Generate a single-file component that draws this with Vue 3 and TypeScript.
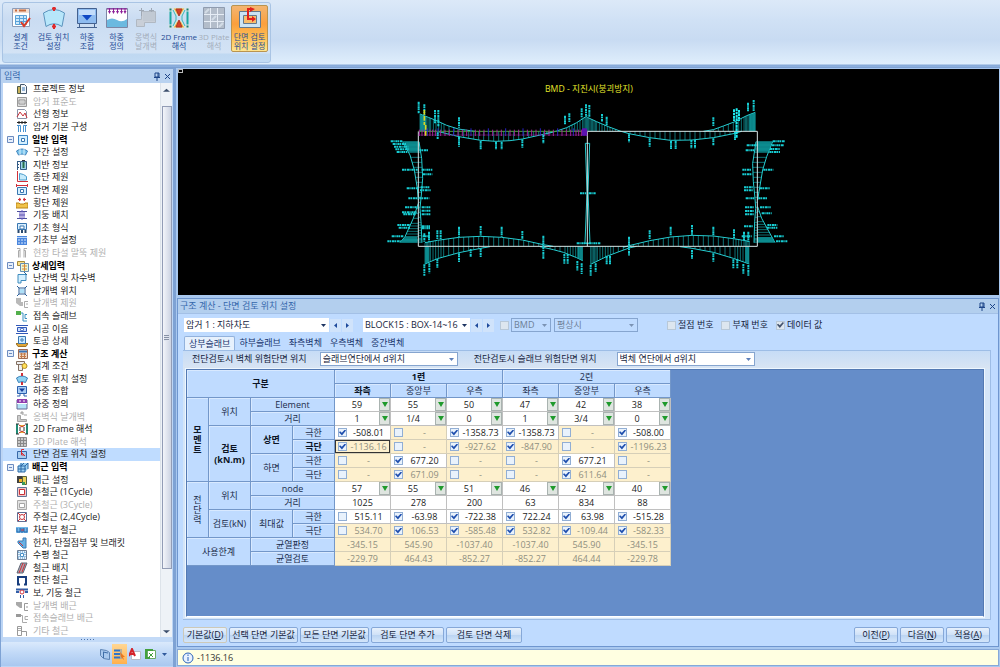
<script setup lang="ts">
import { ref } from 'vue'

interface TreeRow { label: string; icon: string; off?: boolean; group?: boolean; current?: boolean }
interface Tool { lines: string[]; icon: string; off?: boolean; active?: boolean }
interface Head { text: string; rows?: number; cols?: number; bold?: boolean; kind?: string }
interface Row { heads: Head[]; type: 'select' | 'plain' | 'check'; soft?: boolean; cells: string[]; on?: number[] }

const box = (c: string, f: string, extra = '') =>
  `<path d="M1.5 1.5h9v9h-9z" fill="${f}" stroke="${c}"/>${extra}`

const art: Record<string, string> = {
  project: '<path d="M4.500 1.500h4l2 2v7h-6z" fill="#f4f7fb" stroke="#46586e"/><path d="M1.500 3.500h3v7h-3z" fill="#c9b25a" stroke="#4d5a4a"/><path d="M6 5h3M6 7h3" stroke="#3a78b8"/>',
  standard: box('#9a9a9a', '#dedede', '<path d="M3 4h6v4H3z" fill="#f5f5f5" stroke="#8d8d8d"/><path d="M4 6h4" stroke="#aaa"/>'),
  alignment: '<path d="M1.500 1.500h7l2 2v7h-9z" fill="#fff" stroke="#8a93a8"/><path d="M1 9l3-5 3 4 2-3 2 5" fill="none" stroke="#c8323a"/>',
  basic: '<path d="M1 1.500h10" stroke="#222"/><path d="M3 0v3M9 0v3M6 0v3" stroke="#222"/><path d="M1 4.500h3.500V11M11 4.500H7.500V11M2.500 5v6M9.500 5v6" fill="none" stroke="#4a93cf"/>',
  general: box('#3d86c6', '#d5f0ff', '<path d="M4.500 4.500h3v3h-3z" fill="#fff" stroke="#3876b0"/>'),
  section: '<path d="M.500 5q5.500-4 11 0l-2 4q-3.500-2-7 0z" fill="#7fc6ec" stroke="#3f83bc"/><path d="M4 3v6M8 3v6" stroke="#d8f0fc"/>',
  ground: '<path d="M1.500 2v9M1 2.500h3M1 5.500h2M1 8.500h2" stroke="#335c86"/><path d="M4.500 2.500h6v8h-6z" fill="#9fd3e8" stroke="#335c86"/><path d="M7.500 3v6" stroke="#28704a" stroke-width="2"/><path d="M6 1.500h3" stroke="#333"/>',
  profile: '<path d="M1.500 0v10.500H12" stroke="#d0303a" fill="none"/><path d="M3.500 2.500l4 1 3 2v3.500h-7z" fill="#c7ebfb" stroke="#4b9ccb"/>',
  cross: '<path d="M0 1.500h12M.500 0v3M11.500 0v3" stroke="#d0303a"/><path d="M1.500 3.500h9v7h-9z" fill="#d5f0ff" stroke="#3876b0"/><path d="M4.500 5.500h3v3h-3z" fill="#fff" stroke="#3876b0"/>',
  transverse: '<path d="M0 6h3l1 1h4l1-1h3v5H0z" fill="#f1c34a" stroke="#b98518"/><path d="M2 2.500h3M7 2.500h3M3 1l2 1.500L3 4M9 1L7 2.500 9 4" stroke="#d0303a" fill="none"/>',
  pillar: '<path d="M1 2.500h10M1 9.500h10M3 6h6" stroke="#4d4f9e"/><path d="M6 1v10M4 3v6M8 3v6" stroke="#6a5bc4"/>',
  found: '<path d="M1.500 1.500h9v6h-9z" fill="#d8efff" stroke="#3876b0"/><path d="M4 4h4v3H4z" fill="#fff" stroke="#3876b0"/><path d="M2.500 8v3M6 8v3M9.500 8v3" stroke="#27476d" stroke-width="2"/>',
  base: '<path d="M1 2h10v9H1z" fill="#4b86dd"/><path d="M1 3.500h10" stroke="#b8d6fa"/><path d="M2 6h2M5 6h2M8 6h2M2 9h2M5 9h2M8 9h2" stroke="#d9e9ff"/>',
  pile: '<path d="M1 1.500h3v9M11 1.500H8v9M4 3.500h-1.500v7M8 3.500h1.500v7" stroke="#aaa" fill="none"/>',
  detail: '<path d="M.500 1.500h7v4h-7z" fill="#fbe08a" stroke="#a58b3b"/><path d="M3.500 3.500h8v8h-8z" fill="#eaf6d7" stroke="#668fb4"/><path d="M5 6h5M5 9h5M7.500 4v7" stroke="#d88a32"/>',
  rail: '<path d="M2 2.500h8v6H5v2.500H2z" fill="#d5f0ff" stroke="#3f8bbd"/><path d="M8 0l3 3" stroke="#226699"/>',
  wing: '<path d="M1 1l2 2v6l-2 2M11 1L9 3v6l2 2M3 3h6M3 9h6" fill="none" stroke="#2c5f98"/><path d="M4 4h4v4H4z" fill="#aee0f8"/>',
  wingdim: '<path d="M0 1h5v4h2v4H4L0 6z" fill="#b9b9b9"/><path d="M12 4.500H8.500v6H12M10 7h2" fill="none" stroke="#aaa"/>',
  slab: '<path d="M0 1h5v4H0z" fill="#53b04c"/><path d="M5 3h2v8h4M11 4.500H9v4h2" fill="none" stroke="#3d91c2"/>',
  joint: '<path d="M0 2.500h12M0 10.500h12" stroke="#3158b8"/><path d="M1.500 4.500h9v4h-9z" fill="#cde1ff" stroke="#3158b8"/><circle cx="6" cy="6.500" r="1.500" fill="#fff" stroke="#3158b8"/>',
  earth: '<path d="M0 8.500h12l-2 3H2z" fill="#e1a637" stroke="#9f7325"/><path d="M2.500 1.500h7v7h-7z" fill="#cbe9ff" stroke="#3876b0"/><path d="M5 4h2v2H5z" fill="#fff" stroke="#3876b0"/>',
  calc: box('#a06b52', '#f0d8c4', '<path d="M2 3.500h8" stroke="#3a73b8" stroke-width="2"/><path d="M3 6h6M3 8.500h6M4.500 5v5M7.500 5v5" stroke="#c47b4a"/>'),
  cond: '<path d="M.500 1.500h8v3h-8zM2.500 5v5.500h4V5" fill="#eee" stroke="#836f61"/><circle cx="8.500" cy="6" r="2.500" fill="#ffe05a" stroke="#b58c23"/>',
  fan: '<path d="M.500 5q5.500-4 11 0l-2 4.500q-3.500-2-7 0z" fill="#8fd2f2" stroke="#3a80b8"/><path d="M6 0v3M6 9v3" stroke="#d0303a" stroke-width="2"/>',
  combo: '<path d="M1.500 1.500h9v7h-9z" fill="#a9cdf5" stroke="#2c60ad"/><path d="M3 3.500h6L6 7z" fill="#173f9d"/><path d="M1 11h3V9M11 11H8V9" stroke="#2c60ad" fill="none"/>',
  define: '<path d="M1 2h10v9H1z" fill="#b4e2f6" stroke="#636b96"/><path d="M1 1h10v4H1z" fill="#8f3fae"/><path d="M1 5.500h10M4 2v2M8 2v2" stroke="#fff"/>',
  retain: '<path d="M1.500 10.500v-6h3v4h6v2zM5 3V1h2v3M8 4h3" fill="#ccc" stroke="#a2a2a2"/>',
  frame: '<path d="M1 1v10M11 1v10" stroke="#208a74" stroke-width="2"/><path d="M3 2l3 2 3-2M3 10l3-2 3 2" fill="#e8b33a" stroke="#c33124"/><path d="M0 1h3M9 1h3M0 11h3M9 11h3M4 4v4M8 4v4" stroke="#333"/>',
  plate: box('#8d8d8d', '#c9c9c9', '<path d="M1 4.500h10M1 7.500h10M4.500 1v10M7.500 1v10" stroke="#888"/>'),
  review: '<path d="M1.500 3.500h9v7h-9z" fill="#a8cdf0" stroke="#3868a8"/><path d="M8 1.500H5.500v5.500H8M6 5l3 3" fill="none" stroke="#d42a32"/>',
  rebar: '<path d="M1 5l3-3h7v6l-3 3H1z" fill="#9bd0f2"/><path d="M1 5h7v6M1 8h8M4 2v9M4 5l3-3M8 5l3-3M1 11h7M1 5v6M11 2v6" fill="none" stroke="#2d68a6"/>',
  rebarset: '<path d="M1 2h7v7H1z" fill="#404040"/><path d="M3 5h3v3H3z" fill="#f0b52d"/><path d="M6.500 2.500h4v8h-4z" fill="#ecd25a" stroke="#59623e"/><path d="M6 8h3v3H6z" fill="#3a9a5b"/>',
  cycle1: box('#627496', '#f6c7c7', '<path d="M3.500 3.500h5v5h-5z" fill="#fff" stroke="#c8323a"/>'),
  cycle3: box('#aaa', '#e3e3e3', '<path d="M3.500 4.500h5v4h-5z" fill="#fff" stroke="#a5a5a5"/>'),
  cycle24: box('#5f6f94', '#fff', '<circle cx="6" cy="6" r="2.500" fill="#fff" stroke="#c8323a"/><path d="M2 2l2 2M10 2L8 4M2 10l2-2M10 10L8 8" stroke="#c8323a"/>'),
  road: '<path d="M0 3h12v6H0z" fill="#73b9ea"/><path d="M1 4v4h3V4M5 4v4h2V4M8 4v4h3V4" fill="none" stroke="#2a66a8"/><path d="M5 6h3" stroke="#d0303a"/>',
  haunch: '<path d="M7 1h3v10H7L2 6V4h5z" fill="#68b1e4" stroke="#3a7ab4"/><path d="M3 5l4 4" stroke="#c8323a"/>',
  horiz: box('#6c7d94', '#e6f1fb', '<path d="M4.500 4.500h3v3h-3z" fill="#fff" stroke="#4a90c7"/><path d="M2 3h8M2 9h8M3 3v6M9 3v6" stroke="#4a90c7" stroke-dasharray="1 1"/>'),
  place: '<path d="M5 1h6L7 11H1z" fill="#a5a7b2" stroke="#5f6675"/><path d="M7 1L3 11M9 2L6 10" stroke="#d0303a"/>',
  shear: '<path d="M1 3h10M2 3v8M10 3v8M1 10.500h3M8 10.500h3" fill="none" stroke="#173d7d" stroke-width="2"/>',
  beam: '<path d="M0 2.500h12M0 5h3M9 5h3" stroke="#315ea8" stroke-width="2"/><circle cx="6" cy="5" r="2" fill="#fff" stroke="#d0303a"/><path d="M4.500 8v3M7.500 8v3" stroke="#315ea8"/>',
  wingbar: '<path d="M0 2h6v6H4L0 5z" fill="#a9a9a9"/><path d="M12 3.500H8.500v7H12M10 7h2" fill="none" stroke="#999"/>',
  slabbar: '<path d="M0 2h5v3H0z" fill="#999"/><path d="M5 3.500h1.500v7H11M12 4.500H9v3h3" fill="none" stroke="#aaa"/>',
  etc: '<path d="M1.500 1.500h4v9h-4zM6 6.500h4.500V11" fill="none" stroke="#999"/><path d="M2 3.500h3M2 5.500h3" stroke="#aaa"/>',
}

const big: Record<string, string> = {
  cond: '<path d="M2.500 1.500h17v18h-17z" fill="#fff" stroke="#8c9cb8"/><path d="M3 2h16v4H3z" fill="#f2ddd0"/><path d="M5 3.500h2M9 3.500h7" stroke="#c66b3e" stroke-width="2"/><path d="M5.500 8.500h11v9h-11z" fill="#cfe9fb"/><path d="M5.500 8.500h11v9h-11zM5 11.500h12M5 14.500h12M9.500 8v10M13.500 8v10" fill="none" stroke="#5aa2d8"/><path d="M11 15l3 4 6-8" fill="none" stroke="#d93a26" stroke-width="2"/>',
  fan: '<path d="M0.500 6Q11-1 21.500 6L19 19.500Q11 14 3 19.500Z" fill="#b7e6fa" stroke="#5b93bd"/><path d="M9 1.500h4M11 0v4M9 19.500h4M11 17v5" stroke="#e02a2a" stroke-width="2"/>',
  combo: '<path d="M1.500 1.500h19v15h-19z" fill="#8fbcf0" stroke="#44618f"/><path d="M3 3h16v5H3z" fill="#c3dcfa"/><path d="M6 8h10l-5 5.500z" fill="#0f47c4"/><path d="M3.500 17v3M18.500 17v3M1 20.500h20" fill="none" stroke="#44618f"/>',
  define: '<path d="M.500 1.500h21v19H.500z" fill="#fff" stroke="#7d86a5"/><path d="M1 2h20M3.500 1v4M7.500 1v4M11.500 1v4M15.500 1v4M19 1v4" stroke="#8d1f98"/><path d="M2 4h3L3.500 7zM6 4h3L7.500 7zM10 4h3l-1.500 3zM14 4h3l-1.500 3zM17.500 4h3L19 7z" fill="#8d1f98"/><path d="M1 13q5-3 10 0t10-1v8H1z" fill="#6bb9e0"/>',
  retain: '<path d="M6.500 4.500h14v11h-11v4h-8v-7h5z" fill="#c9cfd8" stroke="#b0b8c2"/><path d="M6.500 1v8M16.500 1v4M4 3.500h5M14 3.500h5" stroke="#9fa8b4"/><path d="M8 5h12v9H8z" fill="#c1c9d3"/>',
  frame: '<path d="M2.500 1v20M19.500 1v20" stroke="#1ba7a1" stroke-width="2"/><path d="M5 1h12l-4 7H9zM5 21h12l-4-7H9z" fill="#efb63b"/><path d="M8 2h6l-3 7zM8 20h6l-3-7z" fill="#d64127" stroke="#b0352a"/><path d="M1 1h3v3H1zM18 1h3v3h-3zM1 18h3v3H1zM18 18h3v3h-3z" fill="#1b7d72"/><path d="M5 3l3 6v4l-3 6M17 3l-3 6v4l3 6" fill="none" stroke="#38bcb7"/>',
  plate: '<path d="M.500.500h21v21H.500z" fill="#b3bdca" stroke="#8f9caf"/><path d="M1 7.500h20M1 14.500h20M7.500 1v20M14.500 1v20" stroke="#e6edf5"/><path d="M2 6l4-4M9 13l4-4M16 20l4-4" stroke="#d3dce6" stroke-width="2"/>',
  review: '<path d="M.500 4.500h21v16H.500z" fill="#cbe4f5" stroke="#62798e"/><path d="M4.500 8.500h13v8h-13z" fill="#f7bd6c" stroke="#62798e"/><path d="M13 2H9v10h5" fill="none" stroke="#e0201c" stroke-width="2"/><path d="M11 0l5 2-5 3zM13 9l4 3-4 3z" fill="#e0201c"/>',
}

const tools: Tool[] = [
  { lines: ['설계', '조건'], icon: 'cond' },
  { lines: ['검토 위치', '설정'], icon: 'fan' },
  { lines: ['하중', '조합'], icon: 'combo' },
  { lines: ['하중', '정의'], icon: 'define' },
  { lines: ['옹벽식', '날개벽'], icon: 'retain', off: true },
  { lines: ['2D Frame', '해석'], icon: 'frame' },
  { lines: ['3D Plate', '해석'], icon: 'plate', off: true },
  { lines: ['단면 검토', '위치 설정'], icon: 'review', active: true },
]

const tree: TreeRow[] = [
  { label: '프로젝트 정보', icon: 'project' },
  { label: '암거 표준도', icon: 'standard', off: true },
  { label: '선형 정보', icon: 'alignment' },
  { label: '암거 기본 구성', icon: 'basic' },
  { label: '일반 입력', icon: 'general', group: true },
  { label: '구간 설정', icon: 'section' },
  { label: '지반 정보', icon: 'ground' },
  { label: '종단 제원', icon: 'profile' },
  { label: '단면 제원', icon: 'cross' },
  { label: '횡단 제원', icon: 'transverse' },
  { label: '기둥 배치', icon: 'pillar' },
  { label: '기초 형식', icon: 'found' },
  { label: '기초부 설정', icon: 'base' },
  { label: '현장 타설 말뚝 제원', icon: 'pile', off: true },
  { label: '상세입력', icon: 'detail', group: true },
  { label: '난간벽 및 차수벽', icon: 'rail' },
  { label: '날개벽 위치', icon: 'wing' },
  { label: '날개벽 제원', icon: 'wingdim', off: true },
  { label: '접속 슬래브', icon: 'slab' },
  { label: '시공 이음', icon: 'joint' },
  { label: '토공 상세', icon: 'earth' },
  { label: '구조 계산', icon: 'calc', group: true },
  { label: '설계 조건', icon: 'cond' },
  { label: '검토 위치 설정', icon: 'fan' },
  { label: '하중 조합', icon: 'combo' },
  { label: '하중 정의', icon: 'define' },
  { label: '옹벽식 날개벽', icon: 'retain', off: true },
  { label: '2D Frame 해석', icon: 'frame' },
  { label: '3D Plate 해석', icon: 'plate', off: true },
  { label: '단면 검토 위치 설정', icon: 'review', current: true },
  { label: '배근 입력', icon: 'rebar', group: true },
  { label: '배근 설정', icon: 'rebarset' },
  { label: '주철근 (1Cycle)', icon: 'cycle1' },
  { label: '주철근 (3Cycle)', icon: 'cycle3', off: true },
  { label: '주철근 (2,4Cycle)', icon: 'cycle24' },
  { label: '차도부 철근', icon: 'road' },
  { label: '헌치, 단절점부 및 브래킷', icon: 'haunch' },
  { label: '수평 철근', icon: 'horiz' },
  { label: '철근 배치', icon: 'place' },
  { label: '전단 철근', icon: 'shear' },
  { label: '보, 기둥 철근', icon: 'beam' },
  { label: '날개벽 배근', icon: 'wingbar', off: true },
  { label: '접속슬래브 배근', icon: 'slabbar', off: true },
  { label: '기타 철근', icon: 'etc', off: true },
]

const tabs = ['상부슬래브', '하부슬래브', '좌측벽체', '우측벽체', '중간벽체']
const tab = ref(0)
const sides = ['좌측', '중앙부', '우측', '좌측', '중앙부', '우측']

const rows: Row[] = [
  { heads: [{ text: '모멘트', rows: 6, bold: true, kind: 'tall' }, { text: '위치', rows: 2 }, { text: 'Element', cols: 2 }], type: 'select', cells: ['59', '55', '50', '47', '42', '38'] },
  { heads: [{ text: '거리', cols: 2 }], type: 'select', cells: ['1', '1/4', '0', '1', '3/4', '0'] },
  { heads: [{ text: '검토 (kN.m)', rows: 4, bold: true }, { text: '상면', rows: 2, bold: true }, { text: '극한' }], type: 'check', cells: ['-508.01', '-', '-1358.73', '-1358.73', '-', '-508.00'], on: [0, 2, 3, 5] },
  { heads: [{ text: '극단', bold: true }], type: 'check', soft: true, cells: ['-1136.16', '-', '-927.62', '-847.90', '-', '-1196.23'], on: [0, 2, 3, 5] },
  { heads: [{ text: '하면', rows: 2 }, { text: '극한' }], type: 'check', cells: ['-', '677.20', '-', '-', '677.21', '-'], on: [1, 4] },
  { heads: [{ text: '극단' }], type: 'check', soft: true, cells: ['-', '671.09', '-', '-', '611.64', '-'], on: [1, 4] },
  { heads: [{ text: '전단력', rows: 4, kind: 'tall' }, { text: '위치', rows: 2 }, { text: 'node', cols: 2 }], type: 'select', cells: ['57', '55', '51', '46', '42', '40'] },
  { heads: [{ text: '거리', cols: 2 }], type: 'plain', cells: ['1025', '278', '200', '63', '834', '88'] },
  { heads: [{ text: '검토(kN)', rows: 2 }, { text: '최대값', rows: 2 }, { text: '극한' }], type: 'check', cells: ['515.11', '-63.98', '-722.38', '722.24', '63.98', '-515.28'], on: [1, 2, 3, 4, 5] },
  { heads: [{ text: '극단' }], type: 'check', soft: true, cells: ['534.70', '106.53', '-585.48', '532.82', '-109.44', '-582.33'], on: [1, 2, 3, 4, 5] },
  { heads: [{ text: '사용한계', rows: 2, cols: 2 }, { text: '균열판정', cols: 2 }], type: 'plain', soft: true, cells: ['-345.15', '545.90', '-1037.40', '-1037.40', '545.90', '-345.15'] },
  { heads: [{ text: '균열검토', cols: 2 }], type: 'plain', soft: true, cells: ['-229.79', '464.43', '-852.27', '-852.27', '464.44', '-229.78'] },
]

/* Bending moment diagram, in units of a third of a pixel */
type Pt = [number, number]
const TOP = 169, BOTTOM = 514, LEFT = 115, MIDDLE = 622, RIGHT = 1132

const at = (line: Pt[], t: number): number => {
  for (let i = 1; i < line.length; i++) {
    const [a, va] = line[i - 1], [b, vb] = line[i]
    if (t <= b) return va + ((vb - va) * (t - a)) / (b - a)
  }
  return line[line.length - 1][1]
}
const poly = (line: Pt[]) => 'M' + line.map(p => p.join(' ')).join('L')
const flip = (line: Pt[]): Pt[] => line.map(([y, x]) => [x, y])

const slabLines: { axis: number; line: Pt[] }[] = [
  { axis: TOP, line: [[120, 117], [145, 127], [170, 137], [200, 151], [235, 162], [285, 169]] },
  { axis: TOP, line: [[175, 170], [237, 185], [302, 196], [348, 199], [390, 197], [427, 192], [490, 178], [520, 169]] },
  { axis: TOP, line: [[500, 177], [530, 168], [560, 158], [590, 143], [622, 122]] },
  { axis: TOP, line: [[622, 127], [650, 140], [685, 155], [720, 168]] },
  { axis: TOP, line: [[720, 168], [747, 176], [809, 188], [872, 196], [936, 195], [1000, 188], [1065, 175], [1085, 169]] },
  { axis: TOP, line: [[970, 169], [1000, 164], [1030, 153], [1065, 140], [1100, 122], [1126, 112]] },
  { axis: BOTTOM, line: [[135, 503], [172, 496], [237, 487], [302, 484], [365, 487], [427, 495], [490, 509], [520, 514]] },
  { axis: BOTTOM, line: [[135, 567], [172, 551], [237, 533], [302, 520], [330, 515]] },
  { axis: BOTTOM, line: [[480, 515], [520, 524], [550, 532], [590, 548], [608, 557]] },
  { axis: BOTTOM, line: [[632, 568], [685, 542], [747, 519], [770, 514]] },
  { axis: BOTTOM, line: [[730, 517], [747, 512], [809, 497], [872, 486], [936, 481], [1000, 483], [1060, 491], [1108, 499]] },
  { axis: BOTTOM, line: [[900, 515], [936, 520], [1000, 532], [1060, 550], [1108, 567]] },
]
const wallLines: { axis: number; line: Pt[] }[] = [
  { axis: LEFT, line: [[200, 68], [240, 90], [285, 103], [340, 112], [375, 115]] },
  { axis: LEFT, line: [[385, 115], [430, 100], [485, 75], [503, 60]] },
  { axis: LEFT, line: [[200, 117], [250, 125], [310, 128], [360, 124], [400, 120], [440, 123], [503, 126]] },
  { axis: RIGHT, line: [[200, 1178], [245, 1160], [285, 1148], [350, 1137], [375, 1133]] },
  { axis: RIGHT, line: [[395, 1133], [430, 1145], [503, 1185]] },
  { axis: RIGHT, line: [[200, 1128], [265, 1118], [320, 1120], [370, 1125], [400, 1127], [440, 1124], [503, 1122]] },
]

const nearEnd = (x: number) => x < 150 || (x > 600 && x < 650) || x > 1090
const nearMid = (x: number) => x < 190 || (x > 545 && x < 700) || x > 1050
const slabHatch = slabLines.map(({ axis, line }) => {
  let d = ''
  const end = line[line.length - 1][0]
  for (let x = line[0][0]; x <= end; x += nearEnd(x) ? 4 : nearMid(x) ? 8 : 15) d += `M${x} ${axis}V${Math.round(at(line, x))}`
  return d
}).join('')
const wallHatch = wallLines.map(({ axis, line }) => {
  let d = ''
  const end = line[line.length - 1][0]
  for (let y = line[0][0]; y <= end; y += y < 230 || y > 485 ? 4 : y > 430 ? 8 : 15) d += `M${axis} ${y}H${Math.round(at(line, y))}`
  return d
}).join('')
const outline = slabLines.map(s => poly(s.line)).join('') + wallLines.map(w => poly(flip(w.line))).join('')

const upright: [number, number, number][] = [
  [116, 80, 115], [133, 88, 120], [165, 105, 145], [175, 105, 155], [237, 127, 158], [555, 122, 150], [568, 115, 142], [605, 100, 130], [618, 88, 122],
  [628, 90, 125], [666, 117, 140], [680, 125, 152], [1000, 127, 155], [1104, 83, 110], [1121, 75, 108],
  [173, 172, 192], [237, 185, 215], [302, 197, 223], [348, 200, 223], [365, 200, 223], [427, 193, 218], [490, 180, 205],
  [747, 178, 202], [809, 190, 215], [873, 197, 222], [887, 197, 222], [934, 195, 220], [945, 195, 220], [1000, 190, 212], [1065, 170, 195],
  [133, 475, 500], [147, 470, 500], [172, 466, 492], [182, 466, 492], [237, 455, 485], [302, 453, 482], [365, 455, 485], [427, 468, 492], [490, 482, 528],
  [747, 485, 542], [809, 466, 492], [872, 455, 484], [936, 450, 480], [1000, 455, 482], [1062, 463, 492], [1092, 470, 498], [1105, 470, 500],
  [133, 568, 602], [148, 565, 595], [172, 552, 580], [237, 535, 562], [272, 522, 546], [302, 520, 546], [490, 530, 552], [553, 537, 567], [563, 537, 567], [592, 558, 587], [605, 565, 597],
  [632, 570, 602], [647, 565, 590], [680, 542, 570], [690, 542, 570], [936, 525, 553], [1000, 535, 560], [1060, 553, 582], [1072, 553, 582], [1090, 567, 597], [1105, 570, 602],
]
const level: [number, number, number][] = [
  [199, 32, 68], [207, 38, 80], [215, 42, 85], [223, 46, 88], [231, 50, 82], [226, 118, 145], [284, 66, 113], [284, 125, 157], [298, 128, 157], [340, 80, 115], [337, 122, 150], [346, 120, 152],
  [370, 85, 115], [370, 118, 148], [397, 75, 113], [397, 125, 152], [407, 125, 152], [412, 66, 110], [418, 70, 108], [418, 125, 153], [450, 52, 90], [458, 56, 90], [454, 125, 150], [460, 125, 150], [484, 35, 70], [484, 128, 150], [499, 22, 62],
  [199, 1178, 1215], [211, 1100, 1130], [211, 1175, 1212], [222, 1170, 1200], [231, 1168, 1200], [226, 1097, 1122], [284, 1087, 1115], [284, 1150, 1180], [298, 1087, 1117], [337, 1092, 1120], [340, 1140, 1170], [346, 1092, 1118],
  [370, 1097, 1125], [370, 1135, 1162], [397, 1095, 1122], [397, 1140, 1172], [408, 1095, 1122], [415, 1145, 1175], [418, 1095, 1122], [454, 1092, 1120], [450, 1162, 1192], [458, 1160, 1192], [484, 1085, 1115], [484, 1182, 1212], [499, 1188, 1222],
  [355, 600, 618], [355, 626, 648], [505, 590, 620], [505, 626, 662],
]
const marks = upright.map(([x, a, b]) => `M${x} ${a}V${b}`).join('') + level.map(([y, a, b]) => `M${a} ${y}H${b}`).join('')
let ticks = ''
let ticksBlue = ''
for (let x = 118, i = 0; x < 622; x += x < 180 || x > 560 ? 8 : 13, i++) {
  if (i % 4 === 3) ticksBlue += `M${x} 160V183`
  else ticks += `M${x} 164V183`
}
</script>

<template>
  <div class="app">
    <header class="ribbon">
      <nav class="tools">
        <button v-for="t in tools" :key="t.icon" type="button" class="tool" :class="[t.icon, { active: t.active }]" :disabled="t.off">
          <svg viewBox="0 0 22 22" aria-hidden="true" v-html="big[t.icon]"></svg>
          <span v-for="l in t.lines" :key="l">{{ l }}</span>
        </button>
      </nav>
    </header>

    <div class="body">
      <aside class="side">
        <div class="title">
          <span>입력</span>
          <button type="button" aria-label="고정"><svg viewBox="0 0 9 9"><path d="M3 1h4v4H3zM2 5.500h6M5 6v3M6 1v4" /></svg></button>
          <button type="button" aria-label="닫기"><svg viewBox="0 0 9 9"><path d="M2 2l5 5M7 2L2 7" /></svg></button>
        </div>
        <div class="treebox">
          <ul class="tree">
            <li v-for="r in tree" :key="r.label" :class="{ off: r.off, group: r.group, current: r.current }">
              <svg v-if="r.group" class="toggle" viewBox="0 0 7 7"><path d="M.5.5h6v6h-6z" /><path d="M2 3.500h3" /></svg>
              <svg class="pic" viewBox="0 0 12 12" v-html="art[r.icon]"></svg>
              <span>{{ r.label }}</span>
            </li>
          </ul>
          <div class="scroll">
            <svg viewBox="0 0 8 5"><path d="M0 4l4-3.500L8 4z" /></svg>
            <div class="thumb"><i></i></div>
            <svg viewBox="0 0 8 5"><path d="M0 1l4 3.500L8 1z" /></svg>
          </div>
        </div>
        <div class="grip"><i></i></div>
        <div class="dock">
          <button type="button" aria-label="문서"><svg viewBox="0 0 12 12"><path d="M1.500 1.500l6 1 3 2v7l-6-1-3-3z" fill="#a9c9ee" stroke="#5d84b5" /><path d="M4.500 4v6M4 4l5 1" fill="none" stroke="#3f6ea8" /></svg></button>
          <button type="button" class="lit" aria-label="입력"><svg viewBox="0 0 12 12"><path d="M0 2.500h6M0 6h6M0 9.500h6" stroke="#2f74c9" stroke-width="2" /><path d="M7 1v10" stroke="#6e93b8" /><path d="M6 4l5 5-2 0 1 3-3-3z" fill="#e8771f" /></svg></button>
          <button type="button" aria-label="도면"><svg viewBox="0 0 12 12"><path d="M2.500 3.500h9v8h-9z" fill="#fff" stroke="#b8bcc8" /><path d="M0 8l3-7 3 7M1.500 6h3" fill="none" stroke="#d42229" stroke-width="2" /></svg></button>
          <button type="button" aria-label="표"><svg viewBox="0 0 12 12"><path d="M3.500 2.500h8v8h-8z" fill="#fff" stroke="#6aa866" /><path d="M1 1h8v2H3v6h3v2H1z" fill="#43a03d" /><path d="M5 5l4 4M9 5L5 9" fill="none" stroke="#43a03d" /></svg></button>
          <svg class="more" viewBox="0 0 5 3"><path d="M0 0h5L2.500 3z" /></svg>
        </div>
      </aside>

      <main class="main">
        <section class="canvas">
          <svg viewBox="-606 -18 2463 678" role="img" aria-label="BMD">
            <path class="hatch" :d="slabHatch + wallHatch" />
            <path class="curve" :d="outline" />
            <path class="fill" d="M120 119l18 6v44h-18zM1108 119l19-6v56h-19zM72 200h43v30H85zM112 485v18H62l12-18zM135 514h12v47l-12 5zM1096 514h12v52l-12-5zM592 514h16v43l-16-8zM1132 200h44l-10 30h-34zM1132 487h44l8 16h-52z" />
            <path class="curve" d="M616 205h13l-5 145 6 155h-15l6-155z" />
            <path class="frame" :d="`M${LEFT} ${TOP}V${BOTTOM}H${RIGHT}V${TOP}H${MIDDLE}V${BOTTOM}`" />
            <path class="green" :d="`M${LEFT} ${TOP}H${MIDDLE}`" />
            <path class="magenta" :d="ticks" />
            <path class="blue" :d="ticksBlue" />
            <path class="magenta" d="M115 180H622" opacity=".5" />
            <path class="block" d="M606 160h15v22h-15z" />
            <path class="marks" :d="marks" />
            <path class="bright" d="M1062 103V138M1070 100V190M1077 105V138" />
            <path class="yellow" d="M133 105V150M137 150V185" />
            <text x="495" y="50">BMD - 지진시(붕괴방지)</text>
          </svg>
          <i class="corner"></i>
        </section>

        <section class="panel">
          <div class="title">
            <span>구조 계산 - 단면 검토 위치 설정</span>
            <button type="button" aria-label="고정"><svg viewBox="0 0 9 9"><path d="M3 1h4v4H3zM2 5.500h6M5 6v3M6 1v4" /></svg></button>
            <button type="button" aria-label="닫기"><svg viewBox="0 0 9 9"><path d="M2 2l5 5M7 2L2 7" /></svg></button>
          </div>

          <div class="bar">
            <div class="pick flat culvert">
              <select aria-label="암거"><option>암거 1 : 지하차도</option></select>
              <svg viewBox="0 0 5 3"><path d="M0 0h5L2.500 3z" /></svg>
            </div>
            <button type="button" class="step" aria-label="이전 암거"><svg viewBox="0 0 3 5"><path d="M3 0v5L0 2.500z" /></svg></button>
            <button type="button" class="step" aria-label="다음 암거"><svg viewBox="0 0 3 5"><path d="M0 0v5l3-2.500z" /></svg></button>
            <div class="pick flat block-pick">
              <select aria-label="블록"><option>BLOCK15 : BOX-14~16</option></select>
              <svg viewBox="0 0 5 3"><path d="M0 0h5L2.500 3z" /></svg>
            </div>
            <button type="button" class="step" aria-label="이전 블록"><svg viewBox="0 0 3 5"><path d="M3 0v5L0 2.500z" /></svg></button>
            <button type="button" class="step" aria-label="다음 블록"><svg viewBox="0 0 3 5"><path d="M0 0v5l3-2.500z" /></svg></button>
            <input type="checkbox" class="tick pale lone" aria-label="다이어그램" />
            <div class="pick dim bmd">
              <select aria-label="다이어그램 종류" disabled><option>BMD</option></select>
              <svg viewBox="0 0 5 3"><path d="M0 0h5L2.500 3z" /></svg>
            </div>
            <div class="pick dim state">
              <select aria-label="하중 상태" disabled><option>평상시</option></select>
              <svg viewBox="0 0 5 3"><path d="M0 0h5L2.500 3z" /></svg>
            </div>
            <div class="opts">
              <label><input type="checkbox" class="tick pale" />절점 번호</label>
              <label><input type="checkbox" class="tick pale" />부재 번호</label>
              <label><input type="checkbox" class="tick pale" checked />데이터 값</label>
            </div>
          </div>

          <div class="tabs" role="tablist">
            <button v-for="(t, i) in tabs" :key="t" type="button" role="tab" :aria-selected="tab === i" :class="{ on: tab === i }" @click="tab = i">{{ t }}</button>
          </div>

          <div class="page">
            <div class="filters">
              <label for="wall">전단검토시 벽체 위험단면 위치</label>
              <div class="pick lined">
                <select id="wall"><option>슬래브연단에서 d위치</option></select>
                <svg viewBox="0 0 5 3"><path d="M0 0h5L2.500 3z" /></svg>
              </div>
              <label for="slab" class="second">전단검토시 슬래브 위험단면 위치</label>
              <div class="pick lined">
                <select id="slab"><option>벽체 연단에서 d위치</option></select>
                <svg viewBox="0 0 5 3"><path d="M0 0h5L2.500 3z" /></svg>
              </div>
            </div>
            <div class="gridbox">
              <table>
                <colgroup>
                  <col class="c-tall" /><col class="c-head" /><col class="c-head" /><col class="c-head" />
                  <col v-for="n in 6" :key="n" class="c-val" />
                </colgroup>
                <thead>
                  <tr><th colspan="4" rowspan="2" class="bold">구분</th><th colspan="3" class="bold">1련</th><th colspan="3">2련</th></tr>
                  <tr><th v-for="(s, i) in sides" :key="i" :class="{ bold: i === 0 }">{{ s }}</th></tr>
                </thead>
                <tbody>
                  <tr v-for="(r, ri) in rows" :key="ri">
                    <th v-for="h in r.heads" :key="h.text" :rowspan="h.rows" :colspan="h.cols" :class="[h.kind, { bold: h.bold }]">{{ h.text }}</th>
                    <td v-for="(c, ci) in r.cells" :key="ci" :class="{ soft: r.soft || c === '-', focus: ri === 3 && ci === 0 }">
                      <div v-if="r.type === 'select'" class="cell pickcell">
                        <select :aria-label="sides[ci]"><option>{{ c }}</option></select>
                        <span><svg viewBox="0 0 6 5"><path d="M0 0h6L3 5z" /></svg></span>
                      </div>
                      <label v-else-if="r.type === 'check'" class="cell">
                        <input type="checkbox" class="tick" :checked="r.on?.includes(ci)" />
                        <span>{{ c }}</span>
                      </label>
                      <template v-else>{{ c }}</template>
                    </td>
                  </tr>
                </tbody>
              </table>
            </div>
          </div>

          <div class="actions">
            <button type="button" class="w44 default">기본값(<u>D</u>)</button>
            <button type="button" class="w68">선택 단면 기본값</button>
            <button type="button" class="w68">모든 단면 기본값</button>
            <button type="button" class="w72">검토 단면 추가</button>
            <button type="button" class="w76">검토 단면 삭제</button>
            <span class="gap"></span>
            <button type="button" class="w44">이전(<u>P</u>)</button>
            <button type="button" class="w44">다음(<u>N</u>)</button>
            <button type="button" class="w44">적용(<u>A</u>)</button>
          </div>
        </section>

        <footer class="status">
          <svg viewBox="0 0 12 12"><circle cx="6" cy="6" r="5" /><path d="M6 5v4M6 2.500v1.500" /></svg>
          <output>-1136.16</output>
        </footer>
      </main>
    </div>
  </div>
</template>

<style>
body { margin: 0; }
</style>

<style scoped>
.app {
  display: flex;
  flex-direction: column;
  min-height: 100vh;
  box-sizing: border-box;
  background: #a9c8ef;
  color: #15233c;
  font: 9px/12px "Open Sans", "Noto Sans CJK KR", sans-serif;
}
.app *, .app *::after { box-sizing: border-box; }
button, select, input { font: inherit; color: inherit; margin: 0; padding: 0; border: 0; background: none; border-radius: 0; }
svg { display: block; flex: none; }

.ribbon {
  display: flex;
  height: 68px;
  padding: 2px;
  background: linear-gradient(#dce9f8 0, #d0e1f5 20px, #c8dbf2 40px, #dfeefc 64px, #86a9d8 65px, #8db0de 67px, #6e92c6 68px);
}
.tools {
  display: flex;
  align-items: flex-start;
  height: 61px;
  padding: 2px 2px 0 3px;
  border: 1px solid #a9c4e4;
  border-radius: 3px;
  background: linear-gradient(#d8e6f6 0, #cadcf2 16px, #d3e3f5 50px, #bfd8f1 51px, #c2dbf4 60px);
}
.tool {
  display: flex;
  flex-direction: column;
  align-items: center;
  width: 29px;
  height: 47px;
  padding-top: 1px;
  border: 1px solid transparent;
  color: #1f4c94;
  font-size: 8px;
  line-height: 9px;
  white-space: nowrap;
}
.tool svg { width: 22px; height: 22px; margin-bottom: 3px; }
.tool.fan { width: 37px; }
.tool.combo, .tool.retain { width: 30px; }
.tool.frame { width: 36px; }
.tool.plate { width: 34px; }
.tool:disabled { color: #a3adba; }
.tool.active { width: 37px; border-color: #b9944f; border-radius: 2px; background: linear-gradient(#f3b571, #fb9f3c 40%, #fdbf55 70%, #ffe58f); }

.body { display: flex; flex: 1; min-height: 0; }
.side { display: flex; flex-direction: column; width: 176px; flex: none; padding: 0 1px 3px 2px; border: solid #7ea2d4; border-width: 1px 3px 1px 1px; background: #bcd5f5; }
.title { display: flex; align-items: center; gap: 2px; height: 14px; flex: none; color: #3567ab; padding-right: 1px; }
.title span { flex: 1; }
.title button { width: 9px; height: 9px; }
.title svg { width: 9px; height: 9px; fill: none; stroke: #1d4488; }
.side .title { margin: 0 -1px 0 -2px; padding: 0 1px 0 3px; background: #b9d2f0; }
.treebox { display: flex; flex: 1; min-height: 552px; overflow: hidden; background: #fff; }
.tree { display: grid; grid-auto-rows: 1fr; flex: 1; margin: 0; padding: 0; list-style: none; color: #222; }
.tree li { display: flex; align-items: center; min-height: 0; gap: 5px; padding-left: 13px; white-space: nowrap; }
.tree li.off { color: #b0b0b0; }
.tree li.group { gap: 3px; padding-left: 4px; font-weight: 700; color: #000; }
.tree li.current { background: #bfdcff; }
.pic { width: 12px; height: 12px; }
.toggle { width: 7px; height: 7px; fill: #e6effb; stroke: #6d8cc0; }
.scroll { display: flex; flex-direction: column; align-items: center; width: 12px; padding: 5px 0 3px; background: #eef2f7; border-left: 1px solid #dde3ea; }
.scroll svg { width: 7px; height: 5px; fill: #3d4f6d; }
.thumb { display: flex; align-items: center; justify-content: center; flex: 1; width: 10px; margin: 13px 0 60px; border: 1px solid #929cb5; background: linear-gradient(90deg, #f3f5fa, #ccd3e2); }
.thumb i { width: 5px; height: 6px; background: repeating-linear-gradient(#8791a5 0 1px, #dfe4ee 1px 2px); }
.grip { display: grid; place-items: center; height: 5px; background: #c3daf7; }
.grip i { width: 13px; height: 1px; background: repeating-linear-gradient(90deg, #4c73ad 0 1px, #c3daf7 1px 3px); }
.dock { display: flex; align-items: center; justify-content: flex-end; height: 24px; margin: 0 -1px -2px -2px; padding-right: 6px; background: linear-gradient(#dae9fc, #c1d9f7 45%, #a9c8f0); }
.dock button { display: grid; place-items: center; width: 15px; height: 20px; }
.dock button svg { width: 12px; height: 12px; }
.dock .lit { background: linear-gradient(#ffd794, #ffb04d); }
.more { width: 5px; height: 3px; margin-left: 5px; fill: #2f599c; }

.main { display: flex; flex-direction: column; flex: 1; min-width: 0; }
.canvas { position: relative; flex: 1; min-height: 226px; margin: 1px 1px 0 2px; background: #000; }
.canvas > svg { width: 100%; height: 100%; fill: none; stroke-width: 3; }
.corner { position: absolute; left: 0; top: 0; width: 5px; height: 4px; border: 1px solid #bbb; }
.hatch { stroke: #14aab0; stroke-width: 2; }
.curve { stroke: #26ccd0; stroke-width: 3; }
.canvas .fill { fill: #0d979b; opacity: .8; }
.frame { stroke: #d8e6e6; }
.green { stroke: #4aa33c; }
.magenta { stroke: #a1249c; }
.blue { stroke: #2b22c8; }
.block { fill: #5b12b0; }
.marks { stroke: #17ccd2; stroke-width: 6; stroke-dasharray: 7 1 4 2; }
.bright { stroke: #1feaf0; stroke-width: 6; stroke-dasharray: 8 2; }
.yellow { stroke: #d8d820; stroke-width: 5; stroke-dasharray: 14 4; }
.canvas text { fill: #e6e62c; font-size: 26px; }

.panel { display: flex; flex-direction: column; margin: 3px 1px 0; border: 1px solid #6f96cf; background: #bfdbff; }
.panel > .title { padding: 0 1px 0 2px; background: #b3cfee; border-bottom: 1px solid #a3c0e6; height: 15px; }
.bar { display: flex; align-items: center; height: 20px; margin-top: 1px; padding-left: 6px; }
.pick { display: grid; align-items: center; height: 14px; background: #fff; }
.pick select, .pick svg { grid-area: 1 / 1; }
.pick select { width: 100%; height: 100%; padding-left: 2px; appearance: none; opacity: 1; }
.pick svg { justify-self: end; width: 5px; height: 3px; margin-right: 3px; fill: #1e3562; pointer-events: none; }
.pick.lined { width: 138px; border: 1px solid #86a5cf; }
.pick.lined svg { fill: #5c7fba; }
.pick.dim { border: 1px solid #86a5cf; background: #bfdbff; color: #6d8097; }
.pick.dim svg { fill: #7b93b4; }
.culvert { width: 145px; }
.block-pick { width: 107px; margin-left: 10px; }
.bmd { width: 40px; margin-right: 3px; }
.state { width: 84px; }
.step { display: grid; place-items: center; width: 12px; height: 13px; background: #d0e3fb; border-left: 1px solid #bfdbff; }
.step svg { width: 3px; height: 5px; fill: #1e4a9c; }
.opts { display: flex; gap: 8px; margin-left: 29px; }
.opts label { display: flex; align-items: center; gap: 2px; }
.tick { display: grid; place-content: center; flex: none; width: 9px; height: 9px; appearance: none; border: 1px solid #91aed4; background: #e9f2fc; }
.tick:checked::after { content: ""; width: 7px; height: 6px; background: #1f4fae; clip-path: polygon(0 45%, 16% 30%, 40% 55%, 85% 0, 100% 18%, 42% 100%); }
.tick.pale { border-color: #b8c8d8; background: #dde6ef; }
.tick.pale:checked::after { background: #42526e; }
.lone { margin: 0 2px 0 6px; }

.tabs { display: flex; align-items: flex-end; height: 15px; padding-left: 6px; }
.tabs button { height: 14px; padding: 0 4px; white-space: nowrap; color: #16336b; }
.tabs button.on { border: 1px solid #93b2dc; border-bottom: 0; border-radius: 2px 2px 0 0; background: #e7f1fd; }
.page { display: flex; flex-direction: column; flex: 1; margin: 0 7px 0 5px; border: solid #9dbde6; border-width: 1px 1px 1px 0; background: #d4e5f8; }
.filters { display: flex; align-items: center; height: 18px; padding: 0 0 2px 9px; background: linear-gradient(#c6dcf6, #d9e5f3); }
.filters label { margin-right: 13px; white-space: nowrap; }
.filters .second { margin: 0 20px 0 16px; }
.gridbox { flex: 1; min-height: 248px; margin: 0 6px 2px 3px; border: 1px solid #5379b3; border-bottom-color: #fff; outline: 1px solid #eef7ff; background: #658dc9; }

table { width: 484px; table-layout: fixed; border-collapse: separate; border-spacing: 0; text-align: center; line-height: 13px; }
.c-tall { width: 22px; }
.c-head { width: 42px; }
.c-val { width: 56px; }
tr { height: 14px; }
th, td { padding: 0; height: 14px; border: solid #9fb3cf; border-width: 0 1px 1px 0; font-weight: 400; }
th { background: #bfdbff; border-color: #7397c9; box-shadow: inset 1px 1px #d8e9ff; color: #1b2c4a; line-height: 11px; }
th.bold { font-weight: 700; color: #0c1526; }
th.tall { padding: 0 6px; line-height: 10px; word-break: break-all; }
td { background: #fff; color: #222; border-color: #c0c0c0; }
td.soft { background: #fdf0cd; color: #8f8f80; border-color: #d6cfb8; }
td.focus { box-shadow: inset 0 0 0 1px #333; }
.cell { display: flex; align-items: center; height: 13px; padding-left: 3px; }
.cell > span { flex: 1; }
.pickcell { padding: 0; }
.pickcell select { flex: 1; min-width: 0; height: 13px; appearance: none; text-align: center; text-align-last: center; }
.pickcell > span { display: grid; place-items: center; flex: none; width: 11px; height: 13px; border: 1px solid #a9b3b0; background: #dfe5e0; pointer-events: none; }
.pickcell svg { width: 6px; height: 5px; fill: #1f9a2c; }

.actions { display: flex; align-items: center; gap: 2px; height: 26px; padding: 6px 8px 2px 5px; }
.actions button { height: 16px; border: 1px solid #86a8d8; border-radius: 2px; background: linear-gradient(#e6f0fc, #cfe1f7 50%, #bbd4f2 51%, #d3e5fa); white-space: nowrap; line-height: 12px; }
.actions .default { border-color: #cdc9b8; }
.gap { flex: 1; }
.w44 { width: 44px; }
.w68 { width: 69px; }
.w72 { width: 73px; }
.w76 { width: 76px; }
.status { display: flex; align-items: center; gap: 3px; height: 17px; margin: 2px 1px 2px; padding-left: 4px; border: 1px solid #86a8d8; background: #ffffe1; color: #333; }
.status svg { width: 12px; height: 12px; fill: #e8f1ff; stroke: #2b62b8; }
</style>
